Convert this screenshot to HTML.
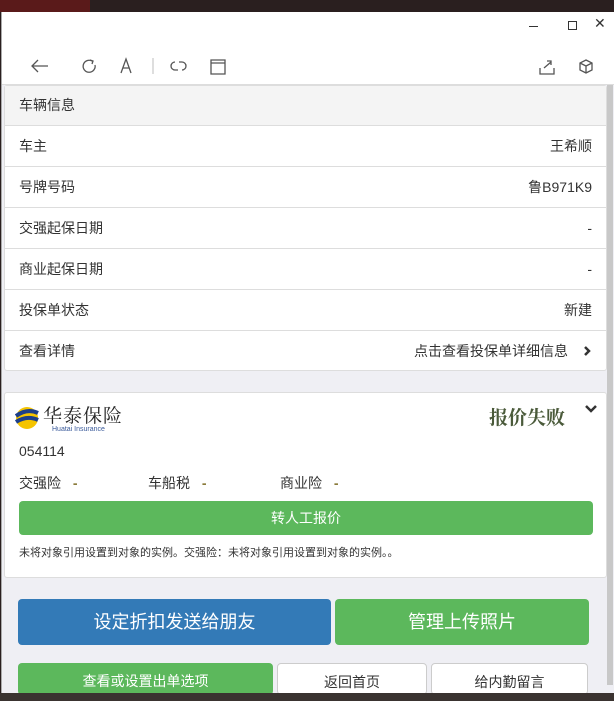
<!DOCTYPE html>
<html><head><meta charset="utf-8"><style>
*{box-sizing:border-box;margin:0;padding:0}
body{width:614px;height:701px;overflow:hidden;background:#2a1f1f;font-family:"Liberation Sans","Noto Sans CJK SC",sans-serif;position:relative}
.win{position:absolute;left:1px;top:12px;width:613px;height:681px;background:#efeff4;border-left:1px solid #aaa}
.tb{position:absolute;left:0;top:0;width:613px;height:73px;background:#fff;border-bottom:1px solid #ddd}
.ic{position:absolute;color:#555}
.card{position:absolute;left:4px;width:603px;background:#fff;border:1px solid #ddd;border-radius:3px}
.row{height:41px;border-top:1px solid #ddd;display:flex;justify-content:space-between;align-items:center;padding:0 14px;font-size:14px;color:#333}
.sb{position:absolute;left:607px;top:85px;width:6px;height:600px;background:#c8c8c8}
.btn{position:absolute;border-radius:4px;color:#fff;text-align:center}
</style></head><body>
<div style="position:absolute;left:0;top:0;width:90px;height:12px;background:#5a1a1a"></div>
<div class="win">
<div class="tb">
 <div class="ic" style="left:527px;width:9px;border-top:1px solid #333;top:14px"></div>
 <div class="ic" style="left:566px;top:9px;width:9px;height:9px;border:1px solid #333"></div>
 <div class="ic" style="left:592px;top:3px;font-size:14px;color:#333">✕</div>
 <svg style="position:absolute;left:0;top:40px" width="613" height="30" fill="none" stroke="#555" stroke-width="1.3">
  <path d="M46 14H30M36 8l-6 6 6 6"/>
  <path d="M90 9a6 6 0 1 0 3 4M88 8l3 1-1 3"/>
  <path d="M119 21l5-14 5 14M121 16h6"/>
  <path d="M151 6v16" stroke="#ccc"/>
  <path d="M173 10a4 4 0 0 0 0 8h3M180 18a4 4 0 0 0 0-8h-3"/>
  <path d="M209 8h14v14h-14zM209 11h14"/>
  <path d="M538 16v6h14v-6M542 16l7-6M545 9h4v4"/>
  <path d="M584 8l6 3v7l-6 3-6-3v-7zM578 11l6 3 6-3M584 14v7"/>
 </svg>
</div>
</div>
<div class="card" style="top:85px;height:286px">
 <div style="height:39px;background:#f4f4f4;padding:0 14px;line-height:39px;font-size:14px;color:#333">车辆信息</div>
 <div class="row"><span>车主</span><span>王希顺</span></div>
 <div class="row"><span>号牌号码</span><span>鲁B971K9</span></div>
 <div class="row"><span>交强起保日期</span><span>-</span></div>
 <div class="row"><span>商业起保日期</span><span>-</span></div>
 <div class="row"><span>投保单状态</span><span>新建</span></div>
 <div class="row"><span>查看详情</span><span style="display:flex;align-items:center">点击查看投保单详细信息<svg style="margin-left:14px" width="10" height="12"><path d="M3 2l4 4-4 4" stroke="#333" stroke-width="2.5" fill="none"/></svg></span></div>
</div>
<div class="card" style="top:392px;height:186px">
 <svg style="position:absolute;left:10px;top:13px" width="24" height="24"><circle cx="12" cy="12" r="11" fill="#f5c400"/><path d="M1 10q11-8 22-3M1 16q11-7 22-2" stroke="#1d3f8a" stroke-width="4" fill="none"/></svg>
 <div style="position:absolute;left:38px;top:8px;font-family:'Noto Serif CJK SC',serif;font-size:19px;color:#222;letter-spacing:1px">华泰保险</div>
 <div style="position:absolute;left:47px;top:33px;font-size:7px;color:#3a5a9a">Huatai Insurance</div>
 <div style="position:absolute;left:410px;top:10px;width:150px;text-align:right;font-family:'Noto Serif CJK SC',serif;font-size:19px;font-weight:bold;color:#4a5a3a">报价失败</div>
 <svg style="position:absolute;left:579px;top:11px" width="14" height="10"><path d="M2 2l5 5 5-5" stroke="#333" stroke-width="2.5" fill="none"/></svg>
 <div style="position:absolute;left:14px;top:50px;font-size:14px;color:#333">054114</div>
 <div style="position:absolute;left:14px;top:80px;font-size:14px;color:#333">交强险 <b style="color:#8a7a3a;margin-left:8px">-</b></div>
 <div style="position:absolute;left:143px;top:80px;font-size:14px;color:#333">车船税 <b style="color:#8a7a3a;margin-left:8px">-</b></div>
 <div style="position:absolute;left:275px;top:80px;font-size:14px;color:#333">商业险 <b style="color:#8a7a3a;margin-left:8px">-</b></div>
 <div class="btn" style="left:14px;top:108px;width:574px;height:34px;background:#5cb85c;line-height:34px;font-size:14px">转人工报价</div>
 <div style="position:absolute;left:14px;top:151px;font-size:11px;color:#333">未将对象引用设置到对象的实例。交强险：未将对象引用设置到对象的实例。。</div>
</div>
<div class="btn" style="left:18px;top:599px;width:313px;height:46px;background:#337ab7;line-height:46px;font-size:18px">设定折扣发送给朋友</div>
<div class="btn" style="left:335px;top:599px;width:254px;height:46px;background:#5cb85c;line-height:46px;font-size:18px">管理上传照片</div>
<div class="btn" style="left:18px;top:663px;width:255px;height:32px;background:#5cb85c;line-height:36px;font-size:14px">查看或设置出单选项</div>
<div class="btn" style="left:277px;top:663px;width:150px;height:32px;background:#fff;border:1px solid #ccc;color:#333;line-height:36px;font-size:14px">返回首页</div>
<div class="btn" style="left:431px;top:663px;width:157px;height:32px;background:#fff;border:1px solid #ccc;color:#333;line-height:36px;font-size:14px">给内勤留言</div>
<div class="sb"></div>
<div style="position:absolute;left:0;top:693px;width:614px;height:8px;background:#3a3330"></div>
</body></html>
